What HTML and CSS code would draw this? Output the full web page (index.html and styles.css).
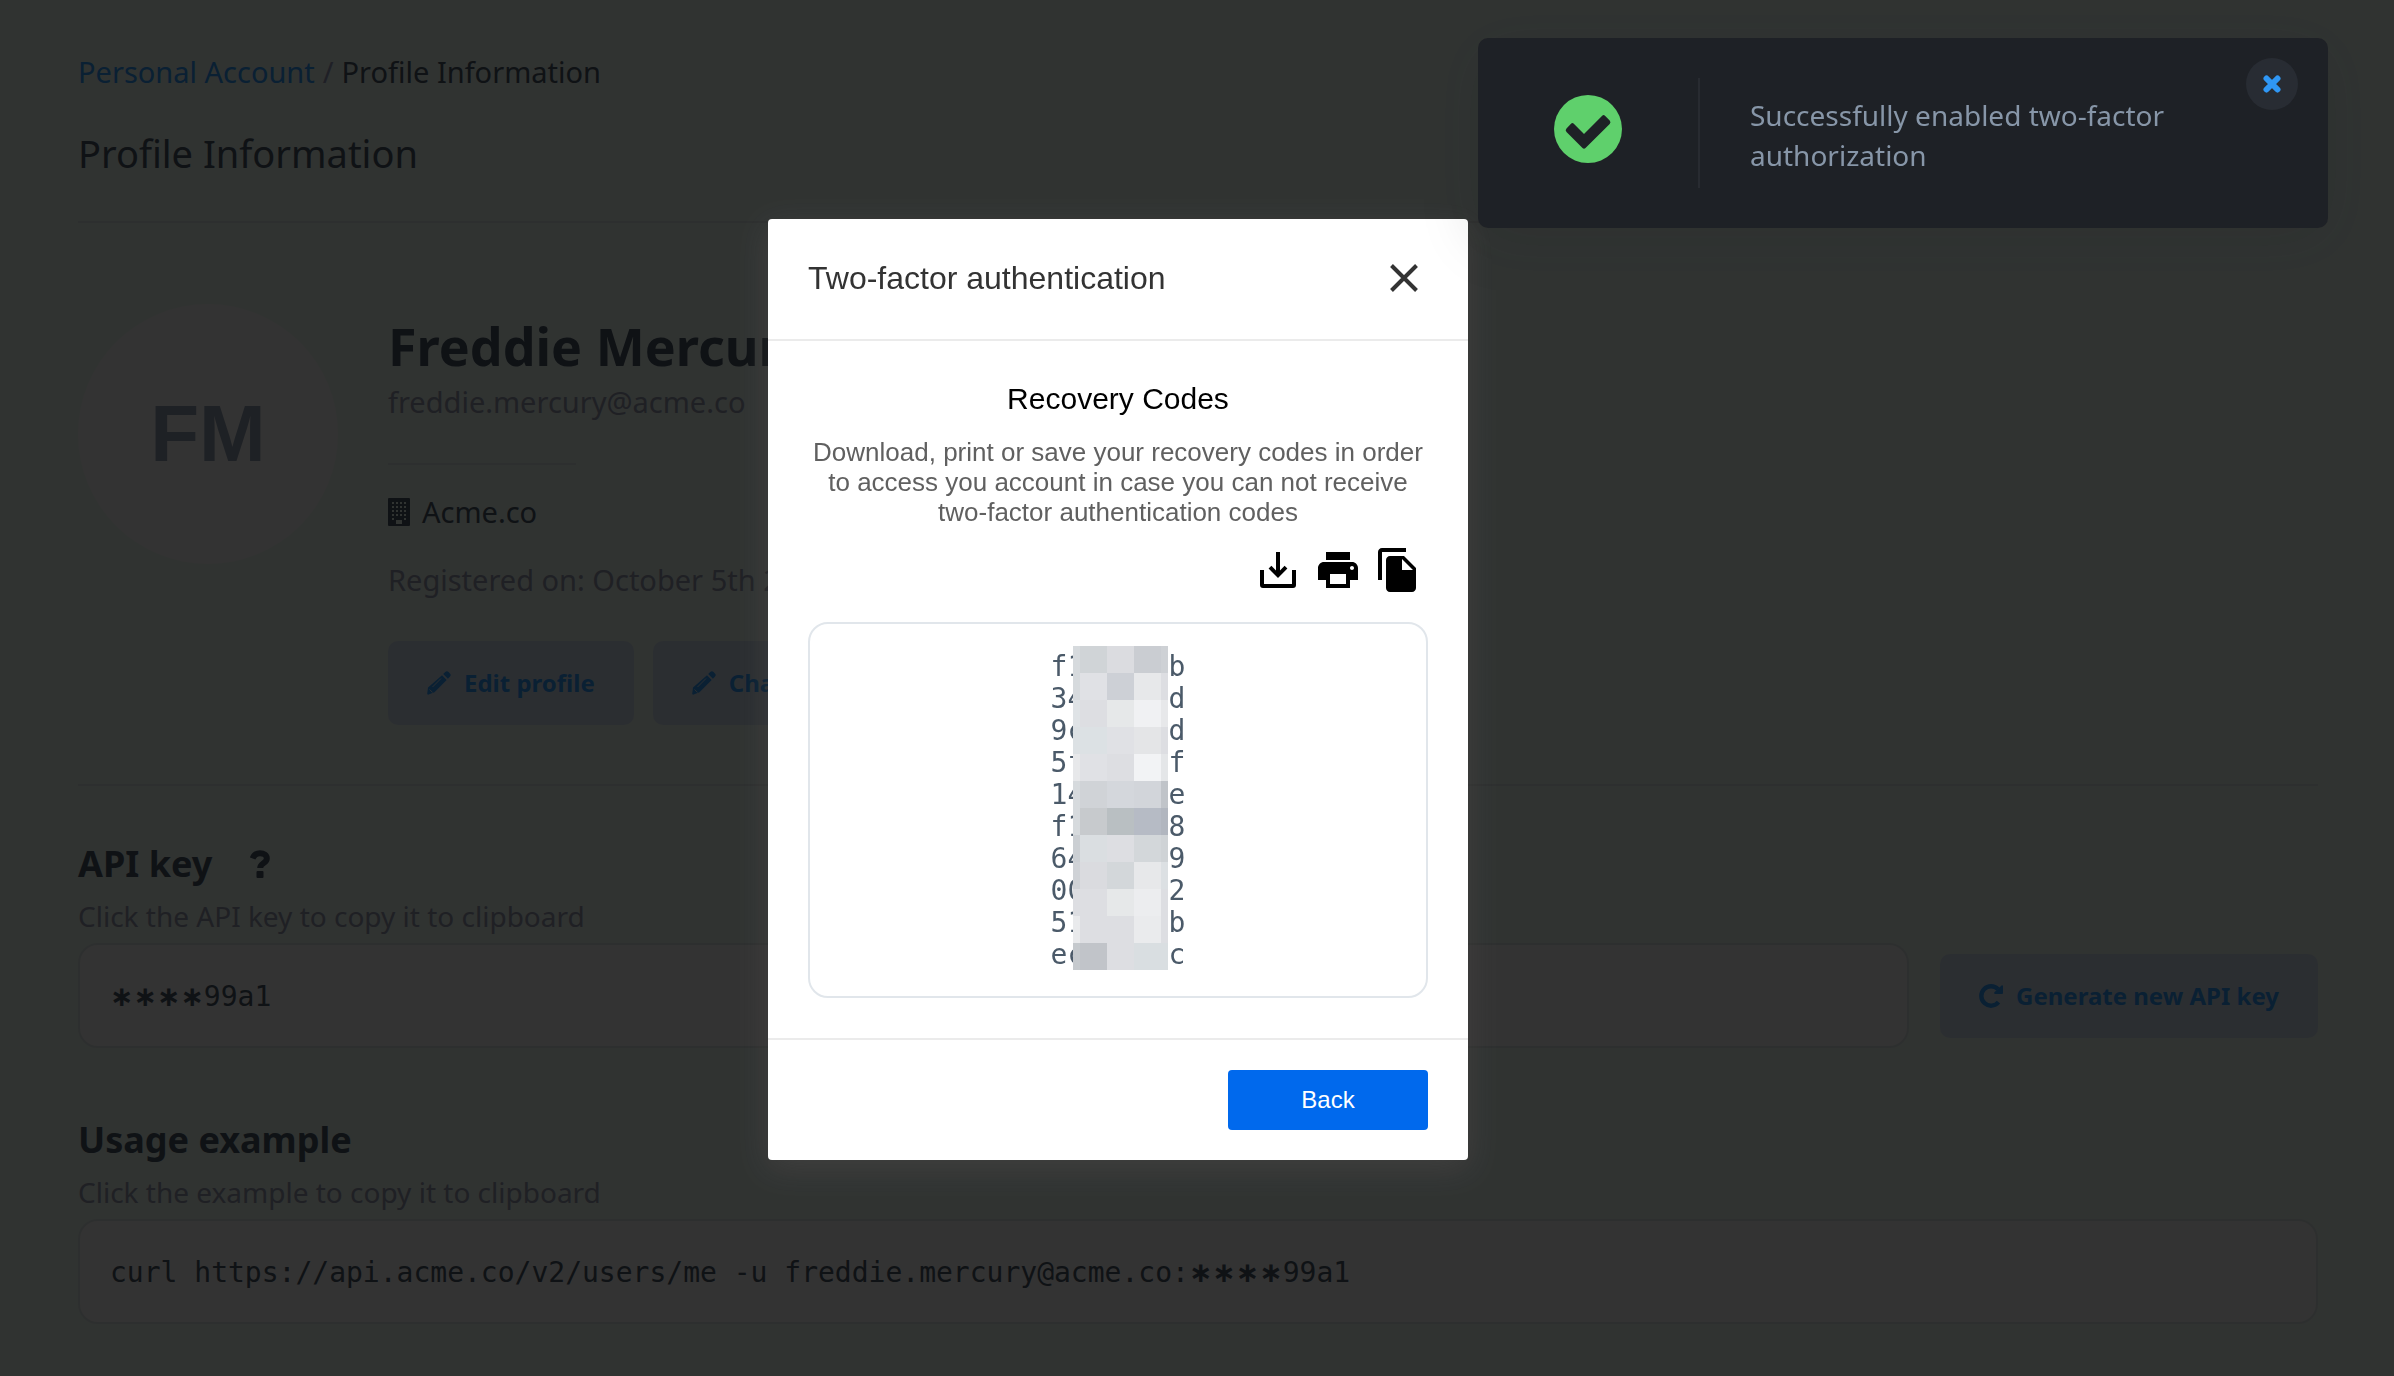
FILE: index.html
```html
<!DOCTYPE html>
<html lang="en">
<head>
<meta charset="utf-8">
<meta name="viewport" content="width=device-width, initial-scale=1">
<title>Profile Information</title>
<link rel="stylesheet" href="styles.css">
</head>
<body>
<main class="page">
  <nav class="breadcrumb" aria-label="Breadcrumb"><a href="#">Personal Account</a><span class="slash">/</span><span>Profile Information</span></nav>
  <h1 class="page-title">Profile Information</h1>
  <hr class="rule">

  <section class="profile">
    <div class="avatar">FM</div>
    <div class="profile-body">
      <h2 class="name">Freddie Mercury</h2>
      <p class="email">freddie.mercury@acme.co</p>
      <hr class="rule rule-short">
      <p class="company">
        <svg class="icon-building" viewBox="0 0 22 28" aria-hidden="true"><path fill="currentColor" fill-rule="evenodd" d="M1 0h20a1 1 0 0 1 1 1v26a1 1 0 0 1-1 1H1a1 1 0 0 1-1-1V1a1 1 0 0 1 1-1zM4 4v2h2V4zm4 0v2h2V4zm4 0v2h2V4zm4 0v2h2V4zM4 8v2h2V8zm4 0v2h2V8zm4 0v2h2V8zm4 0v2h2V8zM4 12v2h2v-2zm4 0v2h2v-2zm4 0v2h2v-2zm4 0v2h2v-2zM4 16v2h2v-2zm4 0v2h2v-2zm4 0v2h2v-2zm4 0v2h2v-2zM4 20v2h2v-2zm12 0v2h2v-2zM8 22v4h6v-4z"/></svg>
        <span>Acme.co</span>
      </p>
      <p class="registered">Registered on: October 5th 2021</p>
      <div class="actions">
        <button type="button" class="btn">
          <svg class="icon-btn" viewBox="0 0 24 24" aria-hidden="true"><path fill="currentColor" d="M15 4.300 19.700 9 7.500 21.200 1 23.800 .2 23 1 16.500zM16.200 3.100 18.200 1.100a2.400 2.400 0 0 1 3.400 0l1.300 1.300a2.400 2.400 0 0 1 0 3.400L20.900 7.800z"/><path class="pencil-mark" d="M5.500 16 14 7.500M2.600 18.500l3 3"/></svg>
          Edit profile
        </button>
        <button type="button" class="btn">
          <svg class="icon-btn" viewBox="0 0 24 24" aria-hidden="true"><path fill="currentColor" d="M15 4.300 19.700 9 7.500 21.200 1 23.800 .2 23 1 16.500zM16.200 3.100 18.200 1.100a2.400 2.400 0 0 1 3.400 0l1.300 1.300a2.400 2.400 0 0 1 0 3.400L20.900 7.800z"/><path class="pencil-mark" d="M5.500 16 14 7.500M2.600 18.500l3 3"/></svg>
          Change password
        </button>
      </div>
    </div>
  </section>
  <hr class="rule">

  <section class="block block-key">
    <h2 class="block-title"><span id="key-title">API key</span>
      <svg class="icon-help" viewBox="0 0 20 28" aria-hidden="true"><path fill="none" stroke="currentColor" stroke-width="6" d="M2.600 8.500C4 5 6.500 3.200 10 3.200c4 0 6.800 2.200 6.800 5.300 0 4.800-6.600 4.500-6.600 9.500"/><rect fill="currentColor" x="6.500" y="21" width="7" height="7" rx="1"/></svg>
    </h2>
    <p class="hint">Click the API key to copy it to clipboard</p>
    <div class="key-row">
      <button type="button" class="field" aria-describedby="key-title"><span class="stars">∗∗∗∗</span>99a1</button>
      <button type="button" class="btn btn-key">
        <svg class="icon-btn" viewBox="0 0 24 24" aria-hidden="true"><path fill="none" stroke="currentColor" stroke-width="4.400" d="M19.500 18.200A9.700 9.700 0 1 1 19 5.200"/><path fill="currentColor" d="M22.500 1.500A1 1 0 0 1 24 2v7a1 1 0 0 1-1 1h-7a1 1 0 0 1-.6-1.700z"/></svg>
        Generate new API key
      </button>
    </div>
  </section>

  <section class="block block-usage">
    <h2 class="block-title" id="usage-title">Usage example</h2>
    <p class="hint">Click the example to copy it to clipboard</p>
    <div class="key-row">
      <button type="button" class="field" aria-describedby="usage-title">curl https://api.acme.co/v2/users/me -u freddie.mercury@acme.co:<span class="stars">∗∗∗∗</span>99a1</button>
    </div>
  </section>
</main>

<div class="backdrop">
  <div class="modal" role="dialog" aria-labelledby="modal-title">
    <header class="modal-header">
      <h2 class="modal-title" id="modal-title">Two-factor authentication</h2>
      <button type="button" class="icon-button" aria-label="Close">
        <svg class="icon-close" viewBox="0 0 28 28"><path fill="none" stroke="currentColor" stroke-width="4" d="M1.500 1.500l25 25M26.500 1.500l-25 25"/></svg>
      </button>
    </header>
    <div class="modal-body">
      <h3 class="modal-heading">Recovery Codes</h3>
      <p class="modal-text">Download, print or save your recovery codes in order to access you account in case you can not receive two-factor authentication codes</p>
      <div class="tools">
        <button type="button" class="icon-button" aria-label="Download">
          <svg class="icon-tool" viewBox="0 0 24 24"><path fill="currentColor" d="M11 3h2v9.200l2.300-2.300 1.400 1.400L12 16l-4.700-4.700 1.400-1.400 2.300 2.300zM3 12h2v7h14v-7h2v7.500a1.500 1.500 0 0 1-1.500 1.500h-15A1.500 1.500 0 0 1 3 19.500z"/></svg>
        </button>
        <button type="button" class="icon-button" aria-label="Print">
          <svg class="icon-tool" viewBox="0 0 24 24"><path fill="currentColor" d="M19 8H5c-1.660 0-3 1.340-3 3v6h4v4h12v-4h4v-6c0-1.660-1.340-3-3-3zm-3 11H8v-5h8v5zm3-7c-.55 0-1-.45-1-1s.45-1 1-1 1 .45 1 1-.45 1-1 1zm-1-9H6v4h12V3z"/></svg>
        </button>
        <button type="button" class="icon-button" aria-label="Copy">
          <svg class="icon-tool" viewBox="0 0 24 24"><path fill="currentColor" d="M16 1H4c-1.100 0-2 .9-2 2v14h2V3h12V1zm-1 4l6 6v10c0 1.100-.9 2-2 2H7.990C6.890 23 6 22.100 6 21l.01-14c0-1.100.89-2 1.990-2h7zm-1 7h5.500L14 6.500V12z"/></svg>
        </button>
      </div>
      <div class="codes">
        <pre class="code-list">f1     b
34     d
9c     d
5f     f
14     e
f1     8
64     9
00     2
51     b
ec     c</pre>
        <svg class="mask" viewBox="0 0 95 324" shape-rendering="crispEdges" aria-hidden="true">
          <path fill="#dddee2" d="M0 0h95v324H0z"/>
          <path fill="#d6dadd" d="M0 0h7v54H0z"/><path fill="#d0d4d7" d="M7 0h27v27H7z"/><path fill="#dbdce0" d="M34 0h27v27H34z"/><path fill="#cacdd2" d="M61 0h27v27H61z"/><path fill="#ced1d5" d="M88 0h7v27h-7z"/>
          <path fill="#e0e1e5" d="M7 27h27v27H7z"/><path fill="#cdd0d6" d="M34 27h27v27H34z"/><path fill="#e7e8ea" d="M61 27h27v27H61z"/>
          <path fill="#dfe3e6" d="M0 54h7v27H0z"/><path fill="#e6e8e9" d="M34 54h27v27H34z"/><path fill="#f0f1f3" d="M61 54h27v27H61z"/><path fill="#e7e8ea" d="M88 54h7v27h-7z"/>
          <path fill="#dce1e4" d="M0 81h34v27H0z"/><path fill="#e0e1e5" d="M34 81h27v27H34z"/><path fill="#e4e5e7" d="M61 81h27v27H61z"/>
          <path fill="#e7e8ea" d="M0 108h7v27H0z"/><path fill="#e0e1e5" d="M7 108h27v27H7z"/><path fill="#f2f3f5" d="M61 108h27v27H61z"/><path fill="#e4e6e8" d="M88 108h7v27h-7z"/>
          <path fill="#d6dadd" d="M0 135h7v54H0z"/><path fill="#d0d3d7" d="M7 135h27v27H7z"/><path fill="#d4d7dc" d="M34 135h27v27H34z"/><path fill="#d2d5da" d="M61 135h27v27H61z"/><path fill="#c0c4c9" d="M88 135h7v27h-7z"/>
          <path fill="#c7cacd" d="M7 162h27v27H7z"/><path fill="#b9bfc2" d="M34 162h27v27H34z"/><path fill="#b6bbc5" d="M61 162h27v27H61z"/><path fill="#b1b6bf" d="M88 162h7v27h-7z"/>
          <path fill="#cbcfd3" d="M0 189h7v27H0z"/><path fill="#dadee1" d="M7 189h27v27H7z"/><path fill="#d3d7da" d="M61 189h27v27H61z"/><path fill="#cfd3d6" d="M88 189h7v27h-7z"/>
          <path fill="#cfd2d6" d="M0 216h7v27H0z"/><path fill="#dadbdf" d="M7 216h27v27H7z"/><path fill="#d3d7da" d="M34 216h27v27H34z"/><path fill="#e7e8ea" d="M61 216h27v27H61z"/><path fill="#dce0e3" d="M88 216h7v27h-7z"/>
          <path fill="#e6e8e9" d="M34 243h27v27H34z"/><path fill="#ecedef" d="M61 243h27v27H61z"/>
          <path fill="#e9eaec" d="M0 270h7v27H0z"/><path fill="#eaebed" d="M61 270h27v27H61z"/>
          <path fill="#c5c9cd" d="M0 297h7v27H0z"/><path fill="#c1c4c9" d="M7 297h27v27H7z"/><path fill="#d9dee1" d="M61 297h34v27H61z"/>
        </svg>
      </div>
    </div>
    <footer class="modal-footer"><button type="button" class="btn-primary">Back</button></footer>
  </div>
</div>

<div class="toast" role="status">
  <div class="toast-icon">
    <svg class="icon-check" viewBox="0 0 68 68" aria-hidden="true"><circle cx="34" cy="34" r="34" fill="#5fd06c"/><path fill="#1e2126" d="M12.500 33.500 17 28.800a2 2 0 0 1 2.800 0L30 39 48.200 20.800a2 2 0 0 1 2.800 0L55.700 25.500a2.500 2.500 0 0 1 0 3.400L31.500 53a2.100 2.100 0 0 1-3 0L12.500 37a2.500 2.500 0 0 1 0-3.500z"/></svg>
  </div>
  <p class="toast-text">Successfully enabled two-factor authorization</p>
  <button type="button" class="toast-close" aria-label="Dismiss">
    <svg class="icon-dismiss" viewBox="0 0 18 18"><path fill="none" stroke="currentColor" stroke-width="6" stroke-linecap="round" d="M3.500 3.500l11 11M14.500 3.500l-11 11"/></svg>
  </button>
</div>
</body>
</html>
```
FILE: styles.css
```css
* { box-sizing: border-box; }

body {
  margin: 0;
  background: #f0fcf6;
  color: #4b5a69;
  font-family: "Noto Sans", "Open Sans", sans-serif;
  font-size: 29px;
  line-height: 40px;
}

h1, h2, h3, p, pre { margin: 0; }

button {
  border: 0;
  font: inherit;
  cursor: pointer;
}

svg { display: block; flex: none; }

/* Page */
.page { padding: 52px 76px 48px 78px; }

.breadcrumb { display: flex; gap: 8px; }
.breadcrumb a { color: #32a0ff; text-decoration: none; }
.slash { color: #9ba0be; }

.page-title {
  margin: 33px 0 40px;
  font-size: 38px;
  font-weight: 400;
  line-height: 56px;
}

.rule {
  height: 2px;
  margin: 0;
  border: 0;
  background: #e1ebe8;
}
.rule-short { width: 188px; margin: 41px 0 27px; }

.profile {
  display: flex;
  gap: 50px;
  padding: 81px 0 59px;
}

.avatar {
  display: flex;
  flex: none;
  align-items: center;
  justify-content: center;
  width: 260px;
  height: 260px;
  border-radius: 50%;
  background: #fffcfc;
  color: #96a5b9;
  font-family: "Liberation Sans", Arial, sans-serif;
  font-size: 80px;
  font-weight: 700;
}

.profile-body { flex: 1; padding-top: 10px; }
.name { font-size: 52px; line-height: 64px; }
.email { margin-top: 4px; color: #9ba0b4; }
.company { display: flex; align-items: center; gap: 12px; }
.icon-building { width: 22px; height: 28px; }
.registered { margin: 28px 0 41px; color: #9ba0b4; }
.actions { display: flex; gap: 19px; }

.btn {
  display: flex;
  flex: none;
  align-items: center;
  gap: 13px;
  height: 84px;
  padding: 0 39px;
  border-radius: 10px;
  background: #d7e6f5;
  color: #32a0ff;
  font-size: 24px;
  font-weight: 700;
}
.icon-btn { width: 24px; height: 24px; }
.pencil-mark { fill: none; stroke: #d7e6f5; stroke-width: 1; }

.block-key { padding-top: 50px; }
.block-usage { padding-top: 64px; }
.block-title {
  display: flex;
  align-items: center;
  gap: 38px;
  font-size: 36px;
  line-height: 56px;
}
.icon-help { width: 20px; height: 28px; }
.hint {
  margin: 6px 0 9px;
  color: #9ba0b4;
  font-size: 28px;
  line-height: 36px;
}
.key-row { display: flex; align-items: center; gap: 31px; }
.field {
  flex: 1;
  min-width: 0;
  height: 105px;
  padding: 2px 30px 0;
  border: 2px solid #e1ebe8;
  border-radius: 20px;
  background: #fffcfc;
  color: #4b5a69;
  font-family: "DejaVu Sans Mono", monospace;
  font-size: 28px;
  text-align: left;
}
.stars { font-family: "DejaVu Sans", sans-serif; font-weight: 700; }

/* Modal */
.backdrop {
  position: fixed;
  inset: 0;
  display: flex;
  align-items: flex-start;
  justify-content: center;
  padding: 219px 158px 0 0;
  background: rgba(0, 0, 0, 0.8);
  font-family: "Liberation Sans", Arial, sans-serif;
}

.modal {
  width: 700px;
  border-radius: 4px;
  background: #fff;
  box-shadow: 0 8px 32px rgba(100, 92, 92, 0.3);
}

.modal-header {
  display: flex;
  align-items: center;
  justify-content: space-between;
  height: 122px;
  padding: 0 50px 2px 40px;
  border-bottom: 2px solid #ebebeb;
}
.modal-title { color: #333; font-size: 32px; font-weight: 400; }
.icon-button { padding: 0; background: none; color: #000; }
.icon-close { width: 28px; height: 28px; color: #333; }

.modal-body { padding: 38px 40px 40px; text-align: center; }
.modal-heading { color: #000; font-size: 30px; font-weight: 400; }
.modal-text {
  margin-top: 18px;
  color: #606060;
  font-size: 26px;
  line-height: 30px;
}
.tools {
  display: flex;
  justify-content: flex-end;
  gap: 12px;
  padding: 19px 6px 28px 0;
}
.icon-tool { width: 48px; height: 48px; }

.codes {
  position: relative;
  display: flex;
  justify-content: center;
  padding: 27px 0 25px;
  border: 2px solid #e1e6eb;
  border-radius: 20px;
}
.code-list {
  color: #4b5a69;
  font-family: "DejaVu Sans Mono", monospace;
  font-size: 28px;
  line-height: 32px;
  text-align: left;
}
.mask {
  position: absolute;
  top: 22px;
  left: 263px;
  width: 95px;
  height: 324px;
}

.modal-footer {
  display: flex;
  justify-content: flex-end;
  padding: 30px 40px;
  border-top: 2px solid #ebebeb;
}
.btn-primary {
  width: 200px;
  height: 60px;
  border-radius: 4px;
  background: #0069ed;
  color: #fff;
  font-size: 24px;
}

/* Toast */
.toast {
  position: fixed;
  top: 38px;
  right: 66px;
  display: flex;
  align-items: center;
  width: 850px;
  height: 190px;
  border-radius: 10px;
  background: #1e2126;
  box-shadow: 0 10px 60px rgba(30, 33, 30, 0.15);
}
.toast-icon {
  display: flex;
  align-items: center;
  justify-content: flex-start;
  width: 222px;
  height: 110px;
  padding: 0 0 8px 76px;
  border-right: 2px solid #282b31;
}
.icon-check { width: 68px; height: 68px; }
.toast-text {
  flex: 1;
  padding: 4px 120px 0 50px;
  color: #8796a8;
  font-size: 28px;
}
.toast-close {
  position: absolute;
  top: 20px;
  right: 30px;
  display: flex;
  align-items: center;
  justify-content: center;
  width: 52px;
  height: 52px;
  padding: 0;
  border-radius: 50%;
  background: #282c33;
  color: #2f97f5;
}
.icon-dismiss { width: 18px; height: 18px; }
```
